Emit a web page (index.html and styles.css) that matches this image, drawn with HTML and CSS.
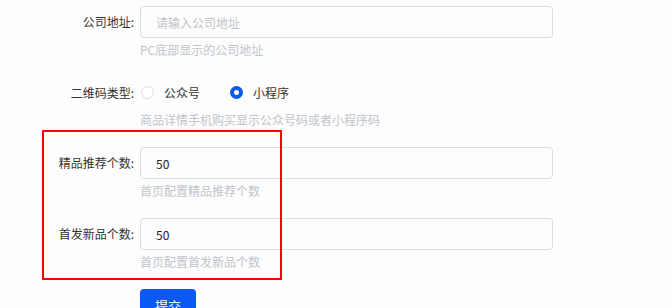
FILE: index.html
```html
<!DOCTYPE html>
<html lang="zh-CN">
<head>
    <meta charset="UTF-8">
    <title>基础设置</title>
    <link rel="stylesheet" href="styles.css">
</head>
<body>

<div class="form">
    <div class="form-item">
        <label class="label">公司地址:</label>
        <div class="field">
            <input class="input" type="text" placeholder="请输入公司地址">
            <div class="help">PC底部显示的公司地址</div>
        </div>
    </div>

    <div class="form-item form-item-radio">
        <label class="label">二维码类型:</label>
        <div class="field">
            <div class="radio-group">
                <span class="radio"><i class="dot"></i>公众号</span>
                <span class="radio checked"><i class="dot"></i>小程序</span>
            </div>
            <div class="help">商品详情手机购买显示公众号码或者小程序码</div>
        </div>
    </div>

    <div class="form-item">
        <label class="label">精品推荐个数:</label>
        <div class="field">
            <input class="input" type="text" value="50">
            <div class="help">首页配置精品推荐个数</div>
        </div>
    </div>

    <div class="form-item">
        <label class="label">首发新品个数:</label>
        <div class="field">
            <input class="input" type="text" value="50">
            <div class="help">首页配置首发新品个数</div>
        </div>
    </div>

    <div class="form-item">
        <span class="label"></span>
        <div class="field">
            <button class="btn-submit">提交</button>
        </div>
    </div>

    <!-- 标注框 -->
    <div class="mark-box"></div>
</div>

</body>
</html>
```

FILE: styles.css
```css
body {
    margin: 0;
    background-color: #fdfdfd;
    font-family: "Noto Sans CJK SC", "Noto Sans", sans-serif;
    font-size: 12px;
    color: #333;
    overflow: hidden;
}

.form {
    position: relative;
    padding-top: 6px;
}

.form-item {
    display: grid;
    grid-template-columns: 134px 413px;
    column-gap: 6px;
    margin-bottom: 18px;
}

.label {
    height: 32px;
    line-height: 32px;
    text-align: right;
    color: #333;
}

.form-item-radio .label {
    height: 31px;
    line-height: 31px;
}

.input {
    display: block;
    box-sizing: border-box;
    width: 100%;
    height: 32px;
    padding: 0 15px;
    border: 1px solid #dcdce4;
    border-radius: 4px;
    background-color: #fdfdfd;
    font-family: inherit;
    font-size: 12px;
    color: #222;
    outline: none;
}

.input::placeholder {
    color: #c2c4cc;
}

.help {
    margin-top: 3px;
    line-height: 18px;
    color: #c0c4cc;
}

.radio-group {
    display: flex;
    align-items: center;
    height: 31px;
    padding-left: 1px;
}

.radio {
    display: flex;
    align-items: center;
    margin-right: 30px;
    color: #333;
}

.dot {
    box-sizing: border-box;
    width: 13px;
    height: 13px;
    margin-right: 10px;
    border: 1px solid #dcdce4;
    border-radius: 50%;
    background-color: #fff;
}

.radio.checked .dot {
    border: 4px solid #0a59f7;
    background-color: #fff;
}

.btn-submit {
    width: 56px;
    height: 32px;
    border: none;
    border-radius: 4px;
    background-color: #0a59f7;
    color: #fff;
    font-family: inherit;
    font-size: 13px;
    cursor: pointer;
}

.mark-box {
    position: absolute;
    left: 42px;
    top: 130px;
    width: 236px;
    height: 146px;
    border: 2px solid #ff0000;
    pointer-events: none;
}
```
